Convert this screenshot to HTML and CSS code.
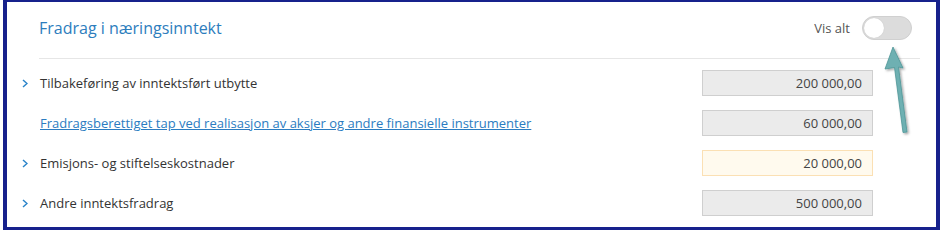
FILE: index.html
```html
<!DOCTYPE html>
<html lang="no">
<head>
    <meta charset="UTF-8">
    <meta name="viewport" content="width=device-width, initial-scale=1.0">
    <title>Fradrag i næringsinntekt</title>
    <link rel="stylesheet" href="styles.css">
</head>
<body>
    <div class="frame">
        <div class="header">
            <h2 class="title">Fradrag i næringsinntekt</h2>
            <div class="showall">
                <span>Vis alt</span>
                <div class="toggle"><div class="knob"></div></div>
            </div>
        </div>
        <div class="rows">
            <div class="row">
                <span class="chev"><svg width="6" height="9" viewBox="0 0 6 9"><polyline points="1,1 5,4.5 1,8" fill="none" stroke="#2a84c9" stroke-width="1.5"/></svg></span>
                <span class="label">Tilbakeføring av inntektsført utbytte</span>
                <input class="amount" type="text" value="200 000,00" readonly>
            </div>
            <div class="row">
                <span class="chev"></span>
                <a class="label link" href="#">Fradragsberettiget tap ved realisasjon av aksjer og andre finansielle instrumenter</a>
                <input class="amount" type="text" value="60 000,00" readonly>
            </div>
            <div class="row">
                <span class="chev"><svg width="6" height="9" viewBox="0 0 6 9"><polyline points="1,1 5,4.5 1,8" fill="none" stroke="#2a84c9" stroke-width="1.5"/></svg></span>
                <span class="label">Emisjons- og stiftelseskostnader</span>
                <input class="amount edit" type="text" value="20 000,00">
            </div>
            <div class="row">
                <span class="chev"><svg width="6" height="9" viewBox="0 0 6 9"><polyline points="1,1 5,4.5 1,8" fill="none" stroke="#2a84c9" stroke-width="1.5"/></svg></span>
                <span class="label">Andre inntektsfradrag</span>
                <input class="amount" type="text" value="500 000,00" readonly>
            </div>
        </div>
        <!-- pointer arrow drawn on top of the screenshot -->
        <svg class="pointer" width="40" height="100" viewBox="0 0 40 100">
            <defs>
                <filter id="sh" x="-50%" y="-50%" width="200%" height="200%">
                    <feDropShadow dx="1.5" dy="1.5" stdDeviation="1" flood-color="#000" flood-opacity="0.35"/>
                </filter>
            </defs>
            <path d="M10 3 L20 24 L15.5 23 L24 88 L20 88.5 L11.5 23.5 L2 25 Z" fill="#6eb0b2" stroke="#4e9597" stroke-width="0.8" filter="url(#sh)"/>
        </svg>
    </div>
</body>
</html>
```

FILE: styles.css
```css
*{
    box-sizing: border-box;
}
body{
    margin: 0;
    background: #fff;
    font-family: "Open Sans", "Liberation Sans", sans-serif;
}
.frame{
    position: relative;
    width: 937px;
    height: 230px;
    margin-left: 3px;
    border-style: solid;
    border-color: #17218c;
    border-width: 2px 4px 3px 4px;
    background: #fff;
}
.header{
    display: flex;
    align-items: center;
    justify-content: space-between;
    height: 57px;
    margin: 0 16px 0 32px;
    padding: 0 8px 4px 0;
    border-bottom: 1px solid #e6e6e6;
}
.title{
    margin: 0;
    font-size: 16px;
    font-weight: normal;
    color: #2d7dbd;
}
.showall{
    display: flex;
    align-items: center;
    gap: 12px;
    font-size: 13px;
    color: #555;
}
.toggle{
    width: 50px;
    height: 24px;
    border-radius: 12px;
    background: #dcdcdc;
    border: 1px solid #d0d0d0;
    padding: 1px;
}
.knob{
    width: 20px;
    height: 20px;
    border-radius: 50%;
    background: #fff;
    box-shadow: 0 0 1px #bbb;
}
.rows{
    padding: 4px 63px 0 15px;
}
.row{
    display: flex;
    align-items: center;
    height: 40px;
}
.chev{
    width: 18px;
    display: flex;
    align-items: center;
}
.label{
    flex: 1;
    font-size: 13px;
    color: #333;
}
.link{
    color: #2b7cc1;
    text-decoration: underline;
}
.amount{
    width: 171px;
    height: 26px;
    border: 1px solid #cfcfcf;
    background: #ebebeb;
    text-align: right;
    padding: 0 10px;
    font-family: inherit;
    font-size: 13px;
    color: #444;
    outline: 0;
}
.edit{
    background: #fffaee;
    border-color: #fbe0b4;
}
.pointer{
    position: absolute;
    left: 876px;
    top: 42px;
}
```
